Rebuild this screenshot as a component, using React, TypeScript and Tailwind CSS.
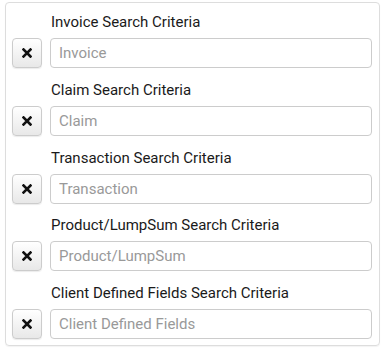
const fields = [
  { label: 'Invoice Search Criteria', placeholder: 'Invoice' },
  { label: 'Claim Search Criteria', placeholder: 'Claim' },
  { label: 'Transaction Search Criteria', placeholder: 'Transaction' },
  { label: 'Product/LumpSum Search Criteria', placeholder: 'Product/LumpSum' },
  { label: 'Client Defined Fields Search Criteria', placeholder: 'Client Defined Fields' },
]

function ClearIcon () {
  return (
    <svg width="10" height="10" viewBox="0 0 10 10">
      <path d="M1.5 1.5 L8.5 8.5 M8.5 1.5 L1.5 8.5" stroke="#111" strokeWidth="2.6" strokeLinecap="square" />
    </svg>
  )
}

export default function App () {
  return (
    <div className="w-[382px] h-[350px] bg-white pt-[2px] pl-[5px] font-['Roboto',sans-serif]">
      <div className="w-[375px] h-[344px] border border-[#ddd] rounded-[4px] shadow-[0_1px_1px_rgba(0,0,0,0.05)] pt-[9px] pl-[6px] pr-[6px] flex flex-col gap-[11.75px]">
        {fields.map((f) => (
          <div key={f.label} className="flex flex-col">
            <div className="pl-[39px] h-[20px] leading-[20px] text-[15px] font-normal text-[#1a1a1a] mb-[6px] whitespace-nowrap">
              {f.label}
            </div>
            <div className="flex items-center gap-[8px]">
              <button className="w-[30px] h-[30px] flex items-center justify-center rounded-[4px] border border-[#ccc] bg-gradient-to-b from-white to-[#e8e8e8] shadow-[0_1px_1px_rgba(0,0,0,0.08)]">
                <ClearIcon />
              </button>
              <input
                className="w-[322px] h-[30px] rounded-[4px] border border-[#ccc] px-[8px] text-[15px] text-[#555] placeholder:text-[#999] outline-none"
                placeholder={f.placeholder}
              />
            </div>
          </div>
        ))}
      </div>
    </div>
  )
}
